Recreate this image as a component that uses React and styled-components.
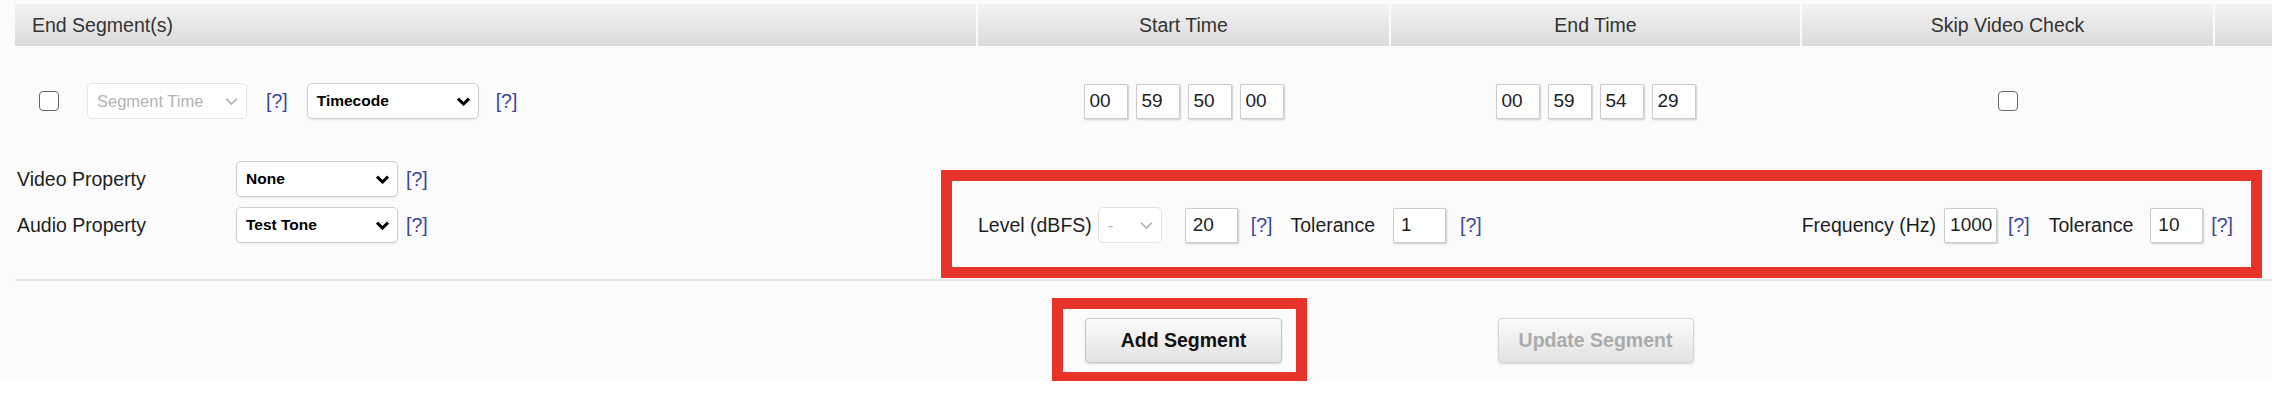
import React from 'react';
import styled, { createGlobalStyle } from 'styled-components';

const GlobalStyle = createGlobalStyle`
  body {
    margin: 0;
    background: #fff;
    font-family: "Liberation Sans", Arial, sans-serif;
  }
`;

const COLS = '961px 411px 409px 411px 57px';
const RED = '#e8332a';

const Page = styled.div`
  width: 2272px;
  box-sizing: border-box;
  padding: 4px 0 0 15px;
  background: #fbfbfb;
  color: #222;
  font-size: 19.5px;
`;

const Grid = styled.div`
  display: grid;
  grid-template-columns: ${COLS};
  column-gap: 2px;
`;

const HeaderRow = styled(Grid)`
  height: 42px;
`;

const HeadCell = styled.div`
  display: flex;
  align-items: center;
  justify-content: ${(p) => (p.$left ? 'flex-start' : 'center')};
  padding: 0 17px;
  background: linear-gradient(#f3f3f3, #dbdbdb);
  color: #333;
`;

const SegmentRow = styled(Grid)`
  height: 110px;
  align-items: center;
`;

const Cell = styled.div`
  display: flex;
  align-items: center;
  justify-content: ${(p) => (p.$left ? 'flex-start' : 'center')};
  padding-left: ${(p) => (p.$left ? '24px' : '0')};
`;

const Check = styled.span`
  display: inline-block;
  flex: none;
  width: 20px;
  height: 20px;
  box-sizing: border-box;
  border: 1.5px solid #666;
  border-radius: 4px;
  background: #fff;
`;

const SelectBox = styled.div`
  display: inline-flex;
  flex: none;
  align-items: center;
  justify-content: space-between;
  box-sizing: border-box;
  width: ${(p) => p.$w}px;
  height: 36px;
  margin-left: ${(p) => p.$ml || 0}px;
  padding: 0 7px 0 9px;
  background: #fff;
  border: 1px solid ${(p) => (p.$disabled ? '#e3e3e3' : '#cdcdcd')};
  border-radius: 5px;
  font-size: ${(p) => (p.$disabled ? '16.5px' : '15.5px')};
  font-weight: ${(p) => (p.$disabled ? 'normal' : 'bold')};
  color: ${(p) => (p.$disabled ? '#b3b3b3' : '#000')};
  box-shadow: ${(p) => (p.$disabled ? 'none' : '0 1px 2px rgba(0, 0, 0, 0.08)')};
`;

const Help = styled.span`
  flex: none;
  margin-left: ${(p) => p.$ml || 0}px;
  color: #3b4799;
`;

const Label = styled.span`
  flex: none;
  margin-left: ${(p) => p.$ml || 0}px;
  color: #1e1e1e;
  white-space: nowrap;
`;

const TimeGroup = styled.div`
  display: flex;
  gap: 8px;
`;

const Field = styled.input`
  flex: none;
  box-sizing: border-box;
  width: ${(p) => p.$w || 53}px;
  height: 35px;
  margin: 0 0 0 ${(p) => p.$ml || 0}px;
  padding: 0 0 0 ${(p) => p.$pad || 7}px;
  border: 1px solid #cbcbcb;
  border-radius: 1px;
  background: #fff;
  box-shadow: 1px 1px 2px rgba(0, 0, 0, 0.18);
  font: 19px "Liberation Sans", Arial, sans-serif;
  color: #222;
  outline: none;
`;

const Props = styled.div`
  display: flex;
  flex-direction: column;
  gap: 10px;
  padding: 5px 21px 36px 2px;
  border-bottom: 2px solid #e6e6e6;
`;

const PropRow = styled.div`
  display: flex;
  align-items: center;
  height: 36px;
`;

const PropLabel = styled.span`
  flex: none;
  width: 219px;
  color: #1e1e1e;
`;

const TonePanel = styled.div`
  position: relative;
  margin-left: auto;
  width: 1299px;
  height: 36px;
  box-sizing: border-box;
  display: flex;
  align-items: center;
  justify-content: space-between;
  padding: 0 18px 0 26px;

  &::after {
    content: '';
    position: absolute;
    left: -11px;
    right: -11px;
    top: -37px;
    bottom: -35px;
    border: 11px solid ${RED};
    pointer-events: none;
  }
`;

const Group = styled.div`
  display: flex;
  align-items: center;
`;

const ButtonRow = styled(Grid)`
  padding: 37px 0 18px;
  align-items: center;
`;

const Highlight = styled.div`
  position: relative;
  display: inline-flex;

  &::after {
    content: '';
    position: absolute;
    left: -33px;
    right: -25px;
    top: -20px;
    bottom: -20px;
    border: 11px solid ${RED};
    pointer-events: none;
  }
`;

const Button = styled.button`
  width: ${(p) => p.$w || 197}px;
  height: 45px;
  padding: 0;
  font: bold 19.5px "Liberation Sans", Arial, sans-serif;
  color: ${(p) => (p.disabled ? '#ababab' : '#111')};
  background: linear-gradient(#fbfbfb, #e2e2e2);
  border: 1px solid ${(p) => (p.disabled ? '#d6d6d6' : '#c6c6c6')};
  border-radius: 4px;
  box-shadow: 0 1px 2px rgba(0, 0, 0, 0.15);
`;

const Chevron = ({ light }) => (
  <svg width="15" height="9" viewBox="0 0 15 9">
    <polyline
      points="2,1.6 7.5,7 13,1.6"
      fill="none"
      stroke={light ? '#b9b9b9' : '#000'}
      strokeWidth={light ? 1.8 : 3}
    />
  </svg>
);

const Select = ({ value, w, ml, disabled }) => (
  <SelectBox $w={w} $ml={ml} $disabled={disabled}>
    <span>{value}</span>
    <Chevron light={disabled} />
  </SelectBox>
);

const Time = ({ parts }) => (
  <TimeGroup>
    {parts.map((p, i) => (
      <Field key={i} readOnly value={p} $w={44} $pad={5} />
    ))}
  </TimeGroup>
);

const App = () => (
  <>
    <GlobalStyle />
    <Page>
      <HeaderRow>
        <HeadCell $left>End Segment(s)</HeadCell>
        <HeadCell>Start Time</HeadCell>
        <HeadCell>End Time</HeadCell>
        <HeadCell>Skip Video Check</HeadCell>
        <HeadCell />
      </HeaderRow>

      <SegmentRow>
        <Cell $left>
          <Check />
          <Select value="Segment Time" w={160} ml={28} disabled />
          <Help $ml={19}>[?]</Help>
          <Select value="Timecode" w={172} ml={19} />
          <Help $ml={17}>[?]</Help>
        </Cell>
        <Cell>
          <Time parts={['00', '59', '50', '00']} />
        </Cell>
        <Cell>
          <Time parts={['00', '59', '54', '29']} />
        </Cell>
        <Cell>
          <Check />
        </Cell>
        <Cell />
      </SegmentRow>

      <Props>
        <PropRow>
          <PropLabel>Video Property</PropLabel>
          <Select value="None" w={162} />
          <Help $ml={8}>[?]</Help>
        </PropRow>
        <PropRow>
          <PropLabel>Audio Property</PropLabel>
          <Select value="Test Tone" w={162} />
          <Help $ml={8}>[?]</Help>
          <TonePanel>
            <Group>
              <Label>Level (dBFS)</Label>
              <Select value="-" w={64} ml={6} disabled />
              <Field readOnly value="20" $ml={23} />
              <Help $ml={13}>[?]</Help>
              <Label $ml={18}>Tolerance</Label>
              <Field readOnly value="1" $ml={18} />
              <Help $ml={14}>[?]</Help>
            </Group>
            <Group>
              <Label>Frequency (Hz)</Label>
              <Field readOnly value="1000" $ml={8} $pad={5} />
              <Help $ml={11}>[?]</Help>
              <Label $ml={19}>Tolerance</Label>
              <Field readOnly value="10" $ml={17} />
              <Help $ml={8}>[?]</Help>
            </Group>
          </TonePanel>
        </PropRow>
      </Props>

      <ButtonRow>
        <Cell />
        <Cell>
          <Highlight>
            <Button>Add Segment</Button>
          </Highlight>
        </Cell>
        <Cell>
          <Button $w={196} disabled>
            Update Segment
          </Button>
        </Cell>
        <Cell />
        <Cell />
      </ButtonRow>
    </Page>
  </>
);

export default App;
